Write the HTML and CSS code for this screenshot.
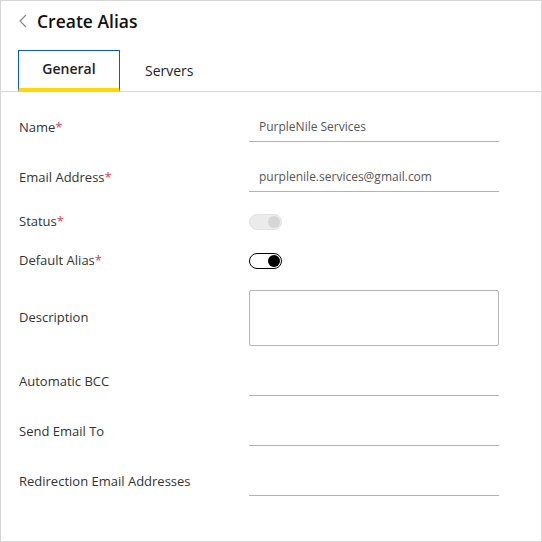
FILE: index.html
```html
<!DOCTYPE html>
<html lang="en">
<head>
    <meta charset="UTF-8">
    <meta name="viewport" content="width=device-width, initial-scale=1.0">
    <title>Create Alias</title>
    <link rel="stylesheet" href="styles.css">
</head>
<body>

    <div class="panel">
        <div class="header">
            <svg class="back" width="8" height="14" viewBox="0 0 8 14">
                <polyline points="7,1 1,7 7,13" fill="none" stroke="#8a8a8a" stroke-width="1.2"/>
            </svg>
            <h1 class="title">Create Alias</h1>
        </div>

        <div class="tabs">
            <div class="tab active">General</div>
            <div class="tab">Servers</div>
        </div>

        <div class="form">
            <div class="row">
                <label class="label">Name<span class="req">*</span></label>
                <div class="input">PurpleNile Services</div>
            </div>
            <div class="row">
                <label class="label">Email Address<span class="req">*</span></label>
                <div class="input">purplenile.services@gmail.com</div>
            </div>
            <div class="row row-toggle">
                <label class="label">Status<span class="req">*</span></label>
                <div class="toggle disabled"><span class="knob"></span></div>
            </div>
            <div class="row row-toggle">
                <label class="label">Default Alias<span class="req">*</span></label>
                <div class="toggle on"><span class="knob"></span></div>
            </div>
            <div class="row row-area">
                <label class="label">Description</label>
                <div class="textarea"></div>
            </div>
            <div class="row">
                <label class="label">Automatic BCC</label>
                <div class="input"></div>
            </div>
            <div class="row">
                <label class="label">Send Email To</label>
                <div class="input"></div>
            </div>
            <div class="row">
                <label class="label">Redirection Email Addresses</label>
                <div class="input"></div>
            </div>
        </div>
    </div>

</body>
</html>
```

FILE: styles.css
```css
body {
    margin: 0;
    padding: 0;
    font-family: "Open Sans", "Liberation Sans", sans-serif;
    background-color: #fff;
}
.panel {
    width: 542px;
    height: 542px;
    box-sizing: border-box;
    border: 1px solid #d6d6d6;
    background-color: #fff;
}
.header {
    display: flex;
    align-items: center;
    padding: 8px 0 1px 18px;
    height: 24px;
}
.back {
    margin-right: 10px;
}
.title {
    margin: 0;
    font-size: 17.5px;
    font-weight: 600;
    line-height: 24px;
    color: #111;
}
.tabs {
    display: flex;
    margin-top: 16px;
    padding-left: 17px;
    height: 41px;
    border-bottom: 1px solid #d6d6d6;
}
.tab {
    padding: 0 25px;
    font-size: 14px;
    line-height: 41px;
    color: #222;
}
.tab.active {
    box-sizing: border-box;
    width: 102px;
    height: 42px;
    padding: 0;
    text-align: center;
    font-weight: 600;
    line-height: 36px;
    border: 1px solid #0a5cb8;
    border-bottom: 4px solid #ffd800;
    margin-bottom: -1px;
}
.form {
    display: flex;
    flex-direction: column;
    gap: 21px;
    padding: 21px 0 0 18px;
}
.row {
    display: flex;
    align-items: center;
}
.row-toggle {
    height: 18px;
}
.row-area {
    margin-top: -1px;
}
.label {
    width: 230px;
    padding-bottom: 2px;
    font-size: 13px;
    color: #333;
}
.req {
    color: #e5394d;
}
.input {
    box-sizing: border-box;
    width: 250px;
    height: 29px;
    padding-left: 10px;
    border-bottom: 1px solid #b3b3b3;
    font-size: 12px;
    line-height: 28px;
    color: #555;
}
.textarea {
    box-sizing: border-box;
    width: 250px;
    height: 56px;
    border: 1px solid #b5b5b5;
    border-radius: 2px;
}
.toggle {
    box-sizing: border-box;
    display: flex;
    justify-content: flex-end;
    align-items: center;
    width: 33px;
    height: 16px;
    padding: 0 1px;
    border-radius: 8px;
}
.knob {
    width: 12px;
    height: 12px;
    border-radius: 50%;
}
.toggle.disabled {
    background-color: #ebebeb;
    border: 1px solid #e2e2e2;
}
.toggle.disabled .knob {
    background-color: #d6d6d6;
}
.toggle.on {
    background-color: #fff;
    border: 1.5px solid #000;
}
.toggle.on .knob {
    background-color: #000;
}
```
